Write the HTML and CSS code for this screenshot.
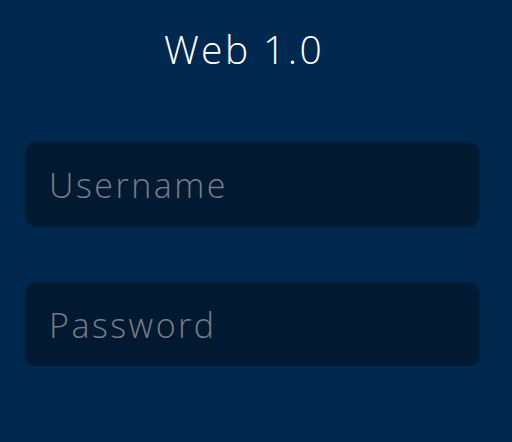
FILE: index.html
```html
<!DOCTYPE html>
<html lang="en">
<head>
  <meta charset="UTF-8">
  <meta name="viewport" content="width=device-width, initial-scale=1.0">
  <title>Web 1.0</title>
  <link rel="stylesheet" href="styles.css">
</head>
<body>
  <h1>Web 1.0</h1>

  <form class="login">
    <input type="text" class="field" placeholder="Username">
    <input type="password" class="field" placeholder="Password">
  </form>
</body>
</html>
```

FILE: styles.css
```css
body {
  margin: 0;
  padding: 0;
  background-color: #01284e;
  font-family: 'Open Sans', Lato, sans-serif;
  color: #fff;
}
h1 {
  margin: 0;
  padding-top: 23px;
  padding-right: 24px;
  text-align: center;
  font-size: 39px;
  font-weight: 300;
  letter-spacing: 2.4px;
  line-height: 52px;
}
.login {
  display: flex;
  flex-direction: column;
  gap: 57px;
  margin-top: 68px;
  padding-left: 26px;
}
.field {
  box-sizing: border-box;
  width: 453px;
  height: 83px;
  padding: 0 23px;
  border: none;
  border-radius: 11px;
  background-color: #011a32;
  box-shadow: 0 0 3px rgba(0, 10, 25, 0.5);
  font-family: 'Open Sans', Lato, sans-serif;
  font-size: 34px;
  font-weight: 300;
  letter-spacing: 2.5px;
  color: #ddd;
  outline: none;
}
.field::placeholder {
  color: #7a7d82;
}
```
